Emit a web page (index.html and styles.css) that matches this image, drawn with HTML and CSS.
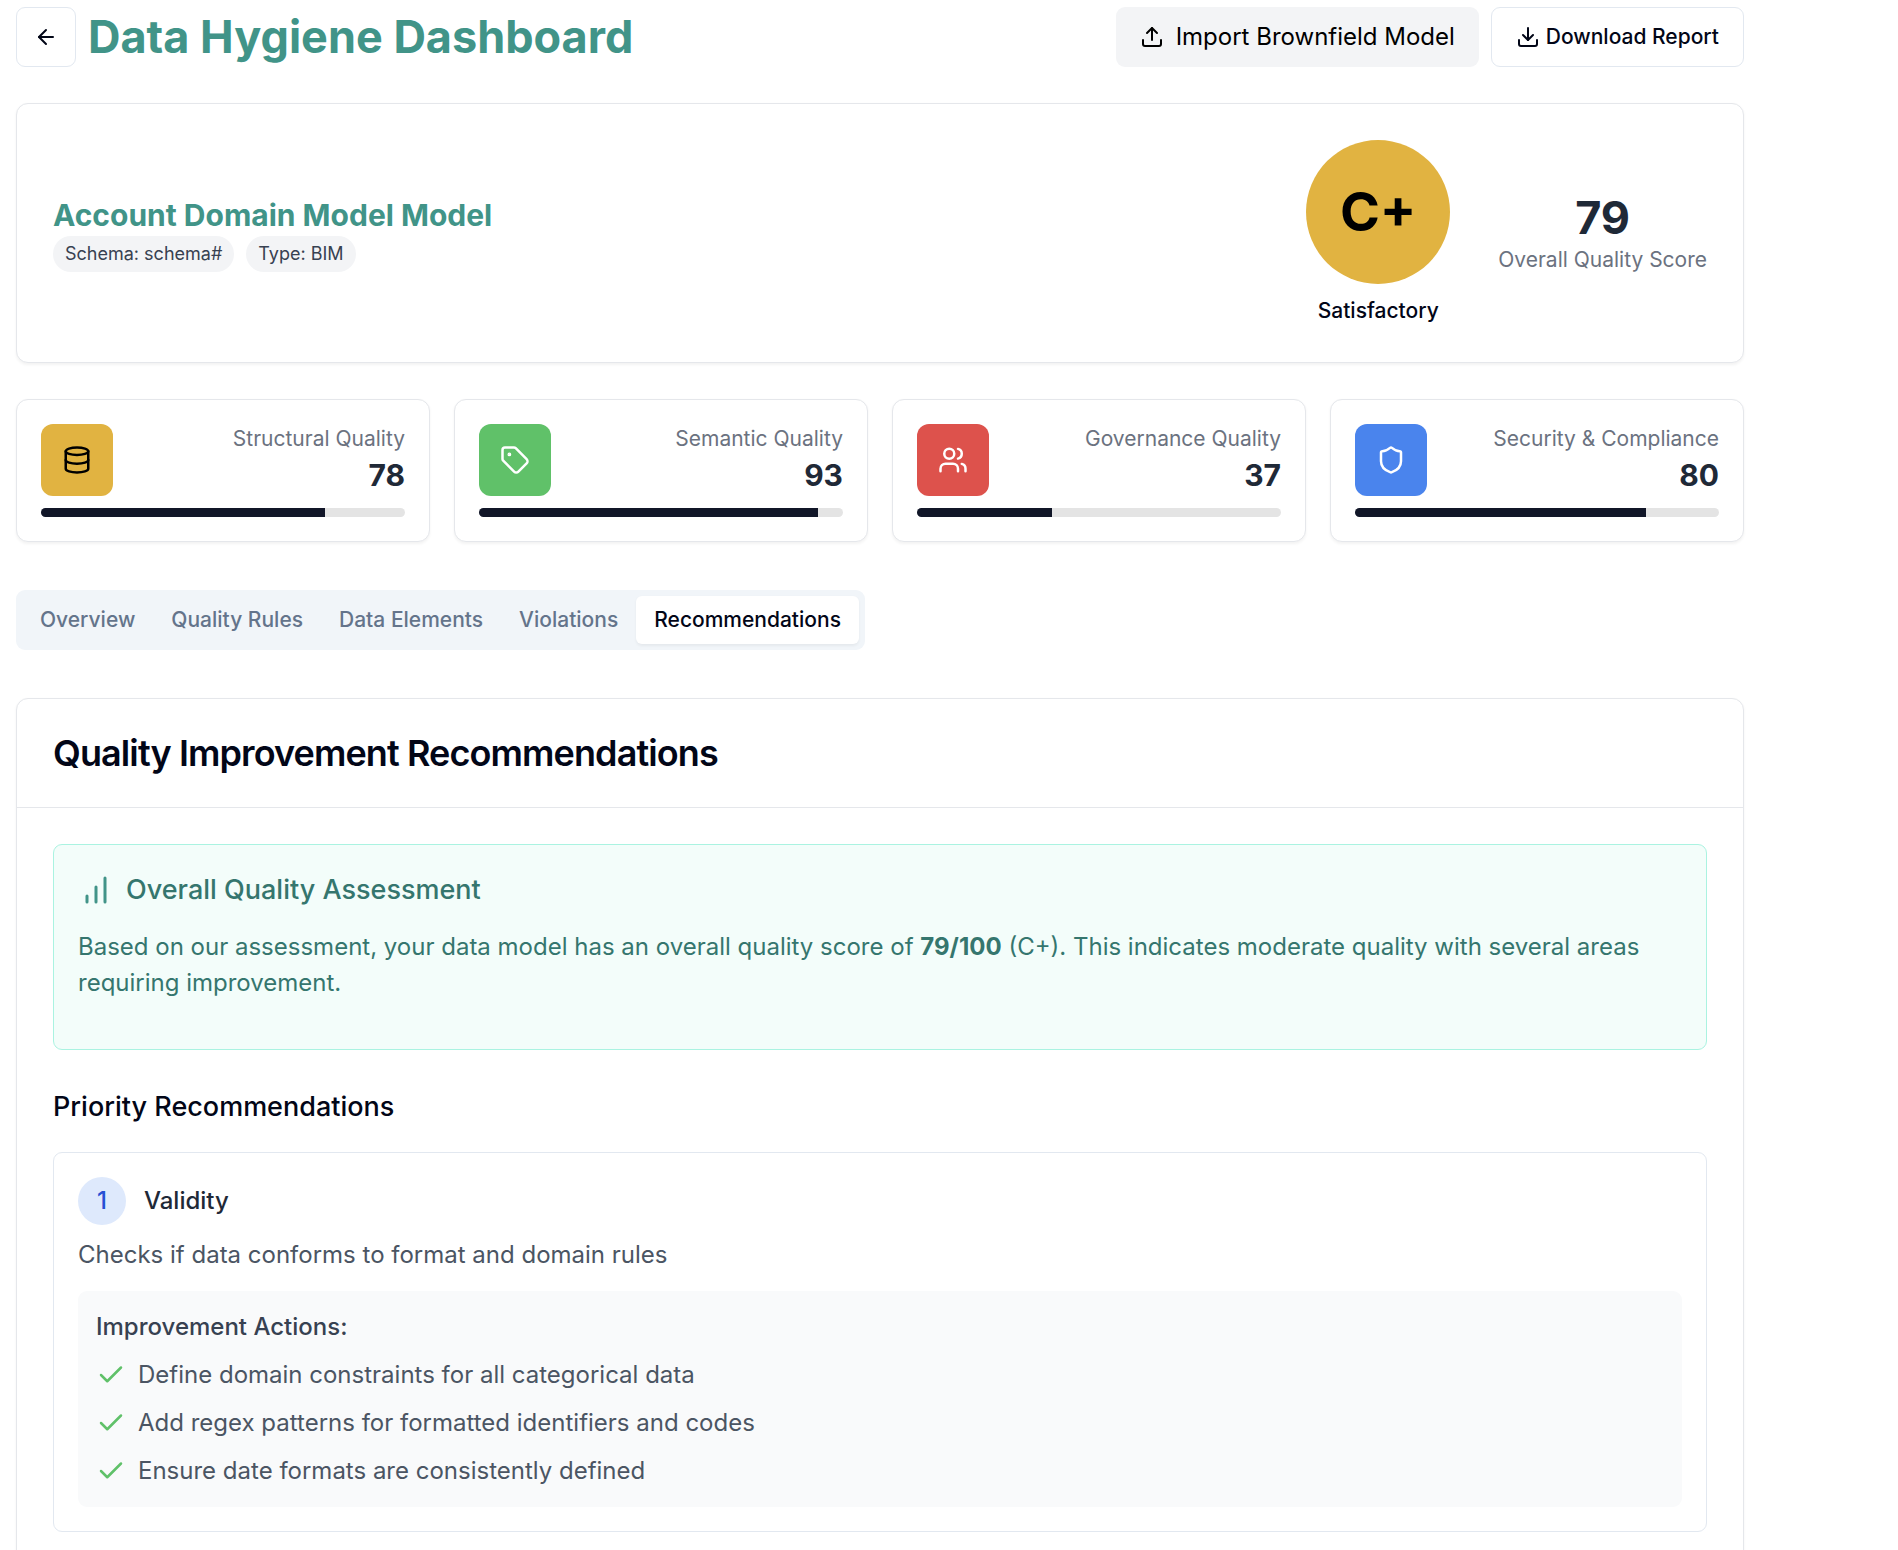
FILE: index.html
```html
<!DOCTYPE html>
<html lang="en">
<head>
<meta charset="utf-8">
<title>Data Hygiene Dashboard</title>
<link rel="stylesheet" href="styles.css">
</head>
<body>
<main class="page">
  <header class="topbar">
    <button class="btn btn-back" aria-label="Back">
      <svg class="icon icon-sm" viewBox="0 0 24 24"><path d="m12 19-7-7 7-7"/><path d="M19 12H5"/></svg>
    </button>
    <h1 class="page-title">Data Hygiene Dashboard</h1>
    <div class="actions">
      <button class="btn btn-import">
        <svg class="icon icon-sm" viewBox="0 0 24 24"><path d="M21 15v4a2 2 0 0 1-2 2H5a2 2 0 0 1-2-2v-4"/><path d="m17 8-5-5-5 5"/><path d="M12 3v12"/></svg>
        <span>Import Brownfield Model</span>
      </button>
      <button class="btn btn-download">
        <svg class="icon icon-sm" viewBox="0 0 24 24"><path d="M21 15v4a2 2 0 0 1-2 2H5a2 2 0 0 1-2-2v-4"/><path d="m7 10 5 5 5-5"/><path d="M12 15V3"/></svg>
        <span>Download Report</span>
      </button>
    </div>
  </header>

  <section class="card summary">
    <div>
      <h2 class="model-name">Account Domain Model Model</h2>
      <div class="pills">
        <span class="pill">Schema: schema#</span>
        <span class="pill">Type: BIM</span>
      </div>
    </div>
    <div class="scores">
      <div class="grade">
        <div class="grade-circle">C+</div>
        <div class="grade-label">Satisfactory</div>
      </div>
      <div class="overall">
        <div class="overall-value">79</div>
        <div class="overall-label">Overall Quality Score</div>
      </div>
    </div>
  </section>

  <section class="metrics">
    <article class="card metric">
      <div class="metric-top">
        <div class="metric-icon yellow">
          <svg class="icon icon-md" viewBox="0 0 24 24"><ellipse cx="12" cy="5" rx="9" ry="3"/><path d="M3 5v14a9 3 0 0 0 18 0V5"/><path d="M3 12a9 3 0 0 0 18 0"/></svg>
        </div>
        <div class="metric-text"><div class="metric-label">Structural Quality</div><div class="metric-value">78</div></div>
      </div>
      <div class="bar"><div class="bar-fill" style="width:78%"></div></div>
    </article>
    <article class="card metric">
      <div class="metric-top">
        <div class="metric-icon green">
          <svg class="icon icon-md" viewBox="0 0 24 24"><path d="M12.586 2.586A2 2 0 0 0 11.172 2H4a2 2 0 0 0-2 2v7.172a2 2 0 0 0 .586 1.414l8.704 8.704a2.426 2.426 0 0 0 3.42 0l6.58-6.58a2.426 2.426 0 0 0 0-3.42z"/><circle cx="7.5" cy="7.5" r=".5" fill="currentColor"/></svg>
        </div>
        <div class="metric-text"><div class="metric-label">Semantic Quality</div><div class="metric-value">93</div></div>
      </div>
      <div class="bar"><div class="bar-fill" style="width:93%"></div></div>
    </article>
    <article class="card metric">
      <div class="metric-top">
        <div class="metric-icon red">
          <svg class="icon icon-md" viewBox="0 0 24 24"><path d="M16 21v-2a4 4 0 0 0-4-4H6a4 4 0 0 0-4 4v2"/><circle cx="9" cy="7" r="4"/><path d="M22 21v-2a4 4 0 0 0-3-3.87"/><path d="M16 3.13a4 4 0 0 1 0 7.75"/></svg>
        </div>
        <div class="metric-text"><div class="metric-label">Governance Quality</div><div class="metric-value">37</div></div>
      </div>
      <div class="bar"><div class="bar-fill" style="width:37%"></div></div>
    </article>
    <article class="card metric">
      <div class="metric-top">
        <div class="metric-icon blue">
          <svg class="icon icon-md" viewBox="0 0 24 24"><path d="M20 13c0 5-3.5 7.5-7.66 8.95a1 1 0 0 1-.67-.01C7.5 20.5 4 18 4 13V6a1 1 0 0 1 1-1c2 0 4.5-1.2 6.24-2.72a1.17 1.17 0 0 1 1.52 0C14.51 3.81 17 5 19 5a1 1 0 0 1 1 1z"/></svg>
        </div>
        <div class="metric-text"><div class="metric-label">Security &amp; Compliance</div><div class="metric-value">80</div></div>
      </div>
      <div class="bar"><div class="bar-fill" style="width:80%"></div></div>
    </article>
  </section>

  <nav class="tabs">
    <button class="tab">Overview</button>
    <button class="tab">Quality Rules</button>
    <button class="tab">Data Elements</button>
    <button class="tab">Violations</button>
    <button class="tab active">Recommendations</button>
  </nav>

  <section class="card panel">
    <div class="panel-head"><h2 class="panel-title">Quality Improvement Recommendations</h2></div>
    <div class="panel-body">
      <div class="assessment">
        <div class="assessment-head">
          <svg class="icon icon-lg" viewBox="0 0 24 24"><path d="M12 20V10"/><path d="M18 20V4"/><path d="M6 20v-4"/></svg>
          <h3 class="assessment-title">Overall Quality Assessment</h3>
        </div>
        <p class="assessment-text">Based on our assessment, your data model has an overall quality score of <strong>79/100</strong> (C+). This indicates moderate quality with several areas requiring improvement.</p>
      </div>
      <h3 class="section-title">Priority Recommendations</h3>
      <article class="rec">
        <div class="rec-head"><span class="rec-num">1</span><h4 class="rec-title">Validity</h4></div>
        <p class="rec-desc">Checks if data conforms to format and domain rules</p>
        <div class="rec-actions">
          <h5 class="actions-title">Improvement Actions:</h5>
          <ul class="checks">
            <li><svg class="icon icon-md check" viewBox="0 0 24 24"><path d="M20 6 9 17l-5-5"/></svg><span>Define domain constraints for all categorical data</span></li>
            <li><svg class="icon icon-md check" viewBox="0 0 24 24"><path d="M20 6 9 17l-5-5"/></svg><span>Add regex patterns for formatted identifiers and codes</span></li>
            <li><svg class="icon icon-md check" viewBox="0 0 24 24"><path d="M20 6 9 17l-5-5"/></svg><span>Ensure date formats are consistently defined</span></li>
          </ul>
        </div>
      </article>
    </div>
  </section>
</main>
</body>
</html>
```
FILE: styles.css
```css
* { box-sizing: border-box; margin: 0; padding: 0; }
body {
  height: 1550px;
  overflow: hidden;
  background: #fff;
  color: #020617;
  font: 400 24px/36px Inter, "Liberation Sans", sans-serif;
}
button { font: inherit; color: inherit; background: none; border: 0; }
ul { list-style: none; }
.page { width: 1728px; margin-left: 16px; padding-top: 7px; }

.icon { flex: none; fill: none; stroke: currentColor; stroke-width: 2; stroke-linecap: round; stroke-linejoin: round; }
.icon-sm { width: 24px; height: 24px; }
.icon-md { width: 30px; height: 30px; }
.icon-lg { width: 36px; height: 36px; }

.topbar { display: flex; align-items: center; gap: 12px; height: 60px; }
.page-title { font-size: 45px; line-height: 54px; font-weight: 700; color: #419488; }
.actions { display: flex; gap: 12px; margin-left: auto; }
.btn { display: flex; align-items: center; justify-content: center; height: 60px; border-radius: 9px; white-space: nowrap; }
.btn-back { width: 60px; border: 1px solid #e2e8f0; }
.btn-import { gap: 12px; padding: 0 24px; background: #f3f4f6; color: #000; }
.btn-download { gap: 6px; padding: 0 24px; border: 1px solid #e2e8f0; font-size: 21px; line-height: 30px; font-weight: 500; }

.card { background: #fff; border: 1px solid #e5e7eb; border-radius: 12px; box-shadow: 0 1.5px 3px rgba(0, 0, 0, .05); }

.summary { display: flex; align-items: center; justify-content: space-between; margin-top: 36px; padding: 36px; }
.model-name { font-size: 30px; line-height: 42px; font-weight: 700; color: #419488; }
.pills { display: flex; gap: 12px; }
.pill { padding: 6px 12px; border-radius: 18px; background: #f3f4f6; color: #374151; font-size: 18px; line-height: 24px; }
.scores { display: flex; align-items: center; gap: 48px; }
.grade { display: flex; flex-direction: column; align-items: center; gap: 12px; }
.grade-circle { display: flex; align-items: center; justify-content: center; width: 144px; height: 144px; border-radius: 50%; background: #e1b341; color: #000; font-size: 54px; line-height: 60px; font-weight: 700; }
.grade-label { font-size: 21px; line-height: 30px; font-weight: 500; }
.overall { text-align: center; }
.overall-value { font-size: 45px; line-height: 54px; font-weight: 700; color: #1f2937; }
.overall-label { font-size: 21px; line-height: 30px; color: #6b7280; }

.metrics { display: grid; grid-template-columns: repeat(4, 1fr); gap: 24px; margin-top: 36px; }
.metric { padding: 24px; }
.metric-top { display: flex; align-items: center; justify-content: space-between; }
.metric-icon { display: flex; align-items: center; justify-content: center; width: 72px; height: 72px; border-radius: 12px; color: #fff; }
.yellow { background: #e1b341; color: #000; }
.green { background: #60c169; }
.red { background: #dd524c; }
.blue { background: #4a84ed; }
.metric-text { text-align: right; }
.metric-label { font-size: 21px; line-height: 30px; color: #6b7280; }
.metric-value { font-size: 30px; line-height: 42px; font-weight: 700; color: #1f2937; }
.bar { height: 9px; margin-top: 12px; border-radius: 5px; background: #e4e4e4; overflow: hidden; }
.bar-fill { height: 100%; background: #111628; }

.tabs { display: inline-flex; height: 60px; margin-top: 48px; padding: 6px; border-radius: 9px; background: #f1f5f9; vertical-align: top; }
.tab { padding: 9px 18px; border-radius: 6px; color: #64748b; font-size: 21px; line-height: 30px; font-weight: 500; }
.tab.active { background: #fff; color: #020617; box-shadow: 0 1.5px 3px rgba(0, 0, 0, .05); }

.panel { margin-top: 48px; }
.panel-head { padding: 36px; border-bottom: 1px solid #e5e7eb; }
.panel-title { font-size: 36px; line-height: 36px; font-weight: 600; letter-spacing: -.9px; }
.panel-body { padding: 36px; }
.assessment { padding: 24px; border: 1px solid #aaf3e1; border-radius: 9px; background: #f3fdfa; color: #35766e; }
.assessment-head { display: flex; align-items: center; gap: 12px; }
.assessment-head .icon { color: #419488; }
.assessment-title { font-size: 27px; line-height: 42px; font-weight: 500; }
.assessment-text { margin: 18px 0 24px; }
.assessment-text strong { font-weight: 700; }
.section-title { margin: 36px 0 24px; font-size: 27px; line-height: 42px; font-weight: 500; }
.rec { padding: 24px; border: 1px solid #e2e8f0; border-radius: 9px; }
.rec-head { display: flex; align-items: center; gap: 18px; }
.rec-num { display: flex; align-items: center; justify-content: center; width: 48px; height: 48px; border-radius: 50%; background: #deE9fc; color: #2650d4; font-weight: 500; }
.rec-title { font-size: 24px; font-weight: 500; color: #1f2937; }
.rec-desc { margin-top: 12px; color: #4b5563; }
.rec-actions { margin-top: 18px; padding: 18px; border-radius: 9px; background: #f9fafb; }
.actions-title { font-size: 24px; font-weight: 500; color: #374151; }
.checks li { display: flex; align-items: center; gap: 12px; margin-top: 12px; color: #4b5563; }
.check { color: #60c169; }
```
